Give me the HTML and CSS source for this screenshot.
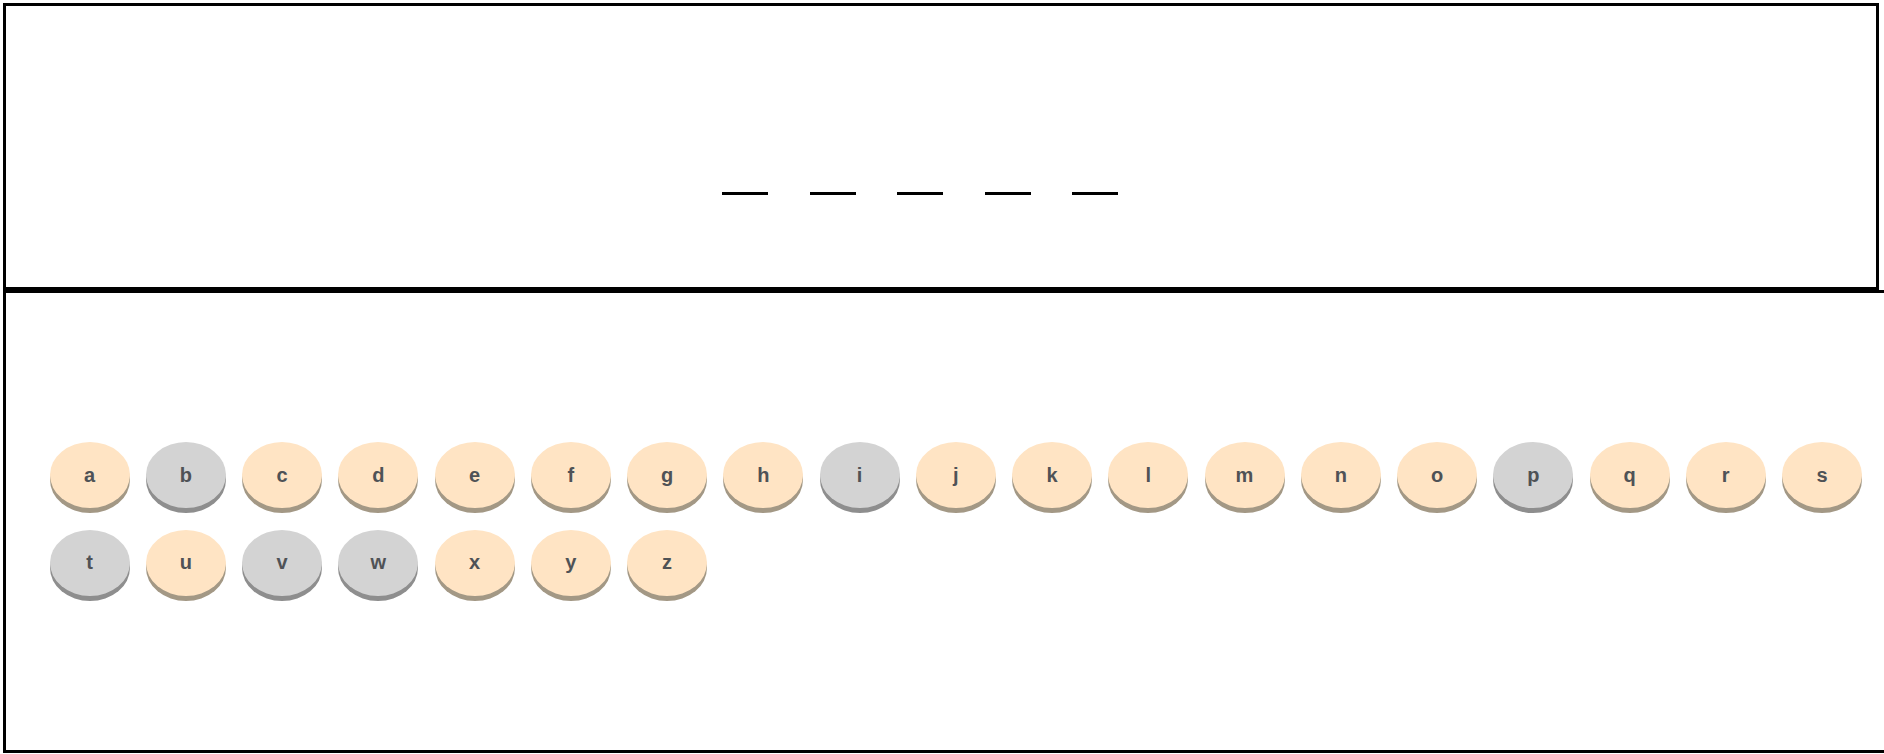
FILE: index.html
```html
<!DOCTYPE html>
<html>
<head>
<meta charset="utf-8">
<title>Hangman</title>
<link rel="stylesheet" href="styles.css">
</head>
<body>
<div class="word-box">
  <div class="word">
    <span class="dash"></span>
    <span class="dash"></span>
    <span class="dash"></span>
    <span class="dash"></span>
    <span class="dash"></span>
  </div>
</div>
<div class="keys-box">
  <div class="keys">
    <button class="key">a</button>
    <button class="key used">b</button>
    <button class="key">c</button>
    <button class="key">d</button>
    <button class="key">e</button>
    <button class="key">f</button>
    <button class="key">g</button>
    <button class="key">h</button>
    <button class="key used">i</button>
    <button class="key">j</button>
    <button class="key">k</button>
    <button class="key">l</button>
    <button class="key">m</button>
    <button class="key">n</button>
    <button class="key">o</button>
    <button class="key used">p</button>
    <button class="key">q</button>
    <button class="key">r</button>
    <button class="key">s</button>
    <button class="key used">t</button>
    <button class="key">u</button>
    <button class="key used">v</button>
    <button class="key used">w</button>
    <button class="key">x</button>
    <button class="key">y</button>
    <button class="key">z</button>
  </div>
</div>
</body>
</html>
```

FILE: styles.css
```css
html {
  overflow: hidden;
}
body {
  margin: 0;
  padding: 3px 0 0 3px;
  background: #fff;
  font-family: "Liberation Sans", Arial, sans-serif;
}
.word-box {
  box-sizing: border-box;
  width: 1876px;
  height: 287px;
  border: 3px solid #000;
  padding-top: 186px;
}
.word {
  display: flex;
  justify-content: center;
}
.dash {
  display: block;
  width: 46px;
  height: 3px;
  background: #000;
  margin-right: 41.5px;
}
.keys-box {
  box-sizing: border-box;
  width: 1890px;
  height: 463px;
  border: 3px solid #000;
  display: flex;
  align-items: center;
  padding: 0 0 5px 43.5px;
}
.keys {
  display: flex;
  flex-wrap: wrap;
  column-gap: 16.25px;
  row-gap: 21.7px;
  width: 1840px;
}
.key {
  width: 80px;
  height: 66px;
  border: none;
  border-radius: 50%;
  background: #ffe4c4;
  box-shadow: 0 5px 0 #a39885;
  color: #4f5256;
  font-family: "Liberation Sans", Arial, sans-serif;
  font-weight: bold;
  font-size: 20px;
  padding: 0;
}
.key.used {
  background: #d3d3d3;
  box-shadow: 0 5px 0 #8e8e8e;
}
```
